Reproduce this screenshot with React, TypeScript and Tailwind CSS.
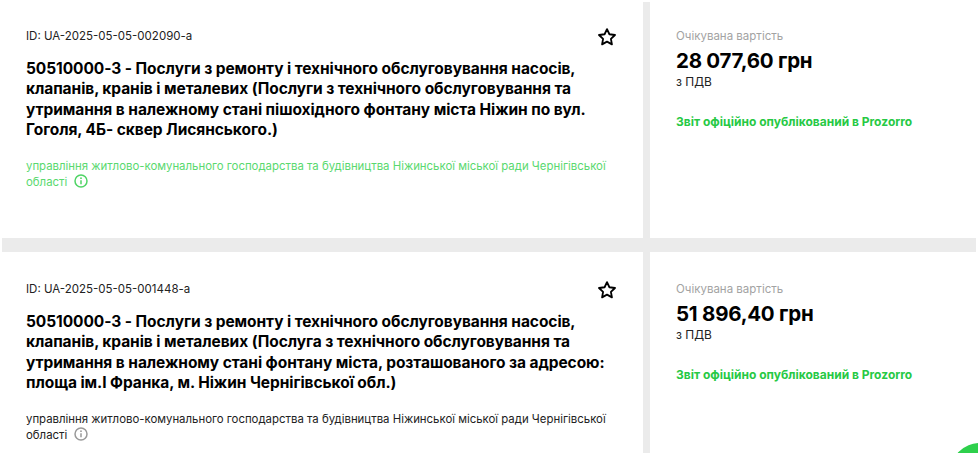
import React from 'react';

type Tender = {
  id: string;
  title: string;
  buyer: string;
  price: string;
  active?: boolean;
};

const tenders: Tender[] = [
  {
    id: 'UA-2025-05-05-002090-a',
    title:
      '50510000-3 - Послуги з ремонту і технічного обслуговування насосів, клапанів, кранів і металевих (Послуги з технічного обслуговування та утримання в належному стані пішохідного фонтану міста Ніжин по вул. Гоголя, 4Б- сквер Лисянського.)',
    buyer: 'управління житлово-комунального господарства та будівництва Ніжинської міської ради Чернігівської області',
    price: '28 077,60 грн',
    active: true,
  },
  {
    id: 'UA-2025-05-05-001448-a',
    title:
      '50510000-3 - Послуги з ремонту і технічного обслуговування насосів, клапанів, кранів і металевих (Послуга з технічного обслуговування та утримання в належному стані фонтану міста, розташованого за адресою: площа ім.І Франка, м. Ніжин Чернігівської обл.)',
    buyer: 'управління житлово-комунального господарства та будівництва Ніжинської міської ради Чернігівської області',
    price: '51 896,40 грн',
  },
];

const Star = () => (
  <svg width="20" height="20" viewBox="0 0 24 24" fill="none" stroke="#000" strokeWidth="2.2" strokeLinejoin="round" className="shrink-0">
    <path d="M12 2.6l2.9 6.1 6.7.9-4.9 4.6 1.2 6.6-5.9-3.2-5.9 3.2 1.2-6.6-4.9-4.6 6.7-.9z" />
  </svg>
);

const Info = ({ color }: { color: string }) => (
  <svg width="14" height="14" viewBox="0 0 14 14" fill="none" className="inline-block ml-[7px] align-[-2px]">
    <circle cx="7" cy="7" r="6" stroke={color} strokeWidth="1.5" />
    <path d="M7 6.2v4" stroke={color} strokeWidth="1.5" />
    <circle cx="7" cy="4.2" r="0.9" fill={color} />
  </svg>
);

const Row = ({ t }: { t: Tender }) => (
  <div className="flex h-[236px]">
    <div className={`w-[641px] pl-[24px] pr-[26px] flex flex-col ${t.active ? 'pt-[26px]' : 'pt-[29px]'}`}>
      <div className="flex justify-between h-[16px]">
        <div className="text-[11.5px] leading-[16px] text-[#222]">ID: {t.id}</div>
        <div className="-mt-[1px]">
          <Star />
        </div>
      </div>
      <div className="mt-[15px] w-[590px] text-[15.5px] leading-[20.3px] font-bold text-black tracking-[-0.07px]">{t.title}</div>
      <div className={`text-[11.4px] ${t.active ? 'mt-[18px] leading-[16px] text-[#5ad96f]' : 'mt-[19px] leading-[15px] text-[#222]'}`}>
        {t.buyer}
        <Info color={t.active ? '#4fd465' : '#999999'} />
      </div>
    </div>
    <div className="w-[7px] bg-[#ebebeb]" />
    <div className={`flex-1 pl-[26px] ${t.active ? 'pt-[26px]' : 'pt-[29px]'}`}>
      <div className="text-[11.5px] leading-[16px] text-[#a3a3a3]">Очікувана вартість</div>
      <div className="mt-[5px] text-[20.5px] leading-[24px] font-bold text-black tracking-[-0.25px]">{t.price}</div>
      <div className="mt-[1px] text-[12px] leading-[16px] text-[#222]">з ПДВ</div>
      <div className="mt-[24px] text-[12px] leading-[16px] font-bold text-[#26c944]">Звіт офіційно опублікований в Prozorro</div>
    </div>
  </div>
);

export default function App() {
  return (
    <div className="relative w-[978px] h-[453px] overflow-hidden bg-white font-['Inter','Liberation_Sans',sans-serif]">
      <div className="pl-[2px] pr-[2px] pt-[2px]">
        <Row t={tenders[0]} />
        <div className="h-[14px] bg-[#ebebeb]" />
        <Row t={tenders[1]} />
      </div>
      {/* край зеленої кнопки внизу праворуч */}
      <div className="absolute left-[950px] top-[443px] w-[60px] h-[60px] rounded-full bg-[#2ed04c]" />
    </div>
  );
}
